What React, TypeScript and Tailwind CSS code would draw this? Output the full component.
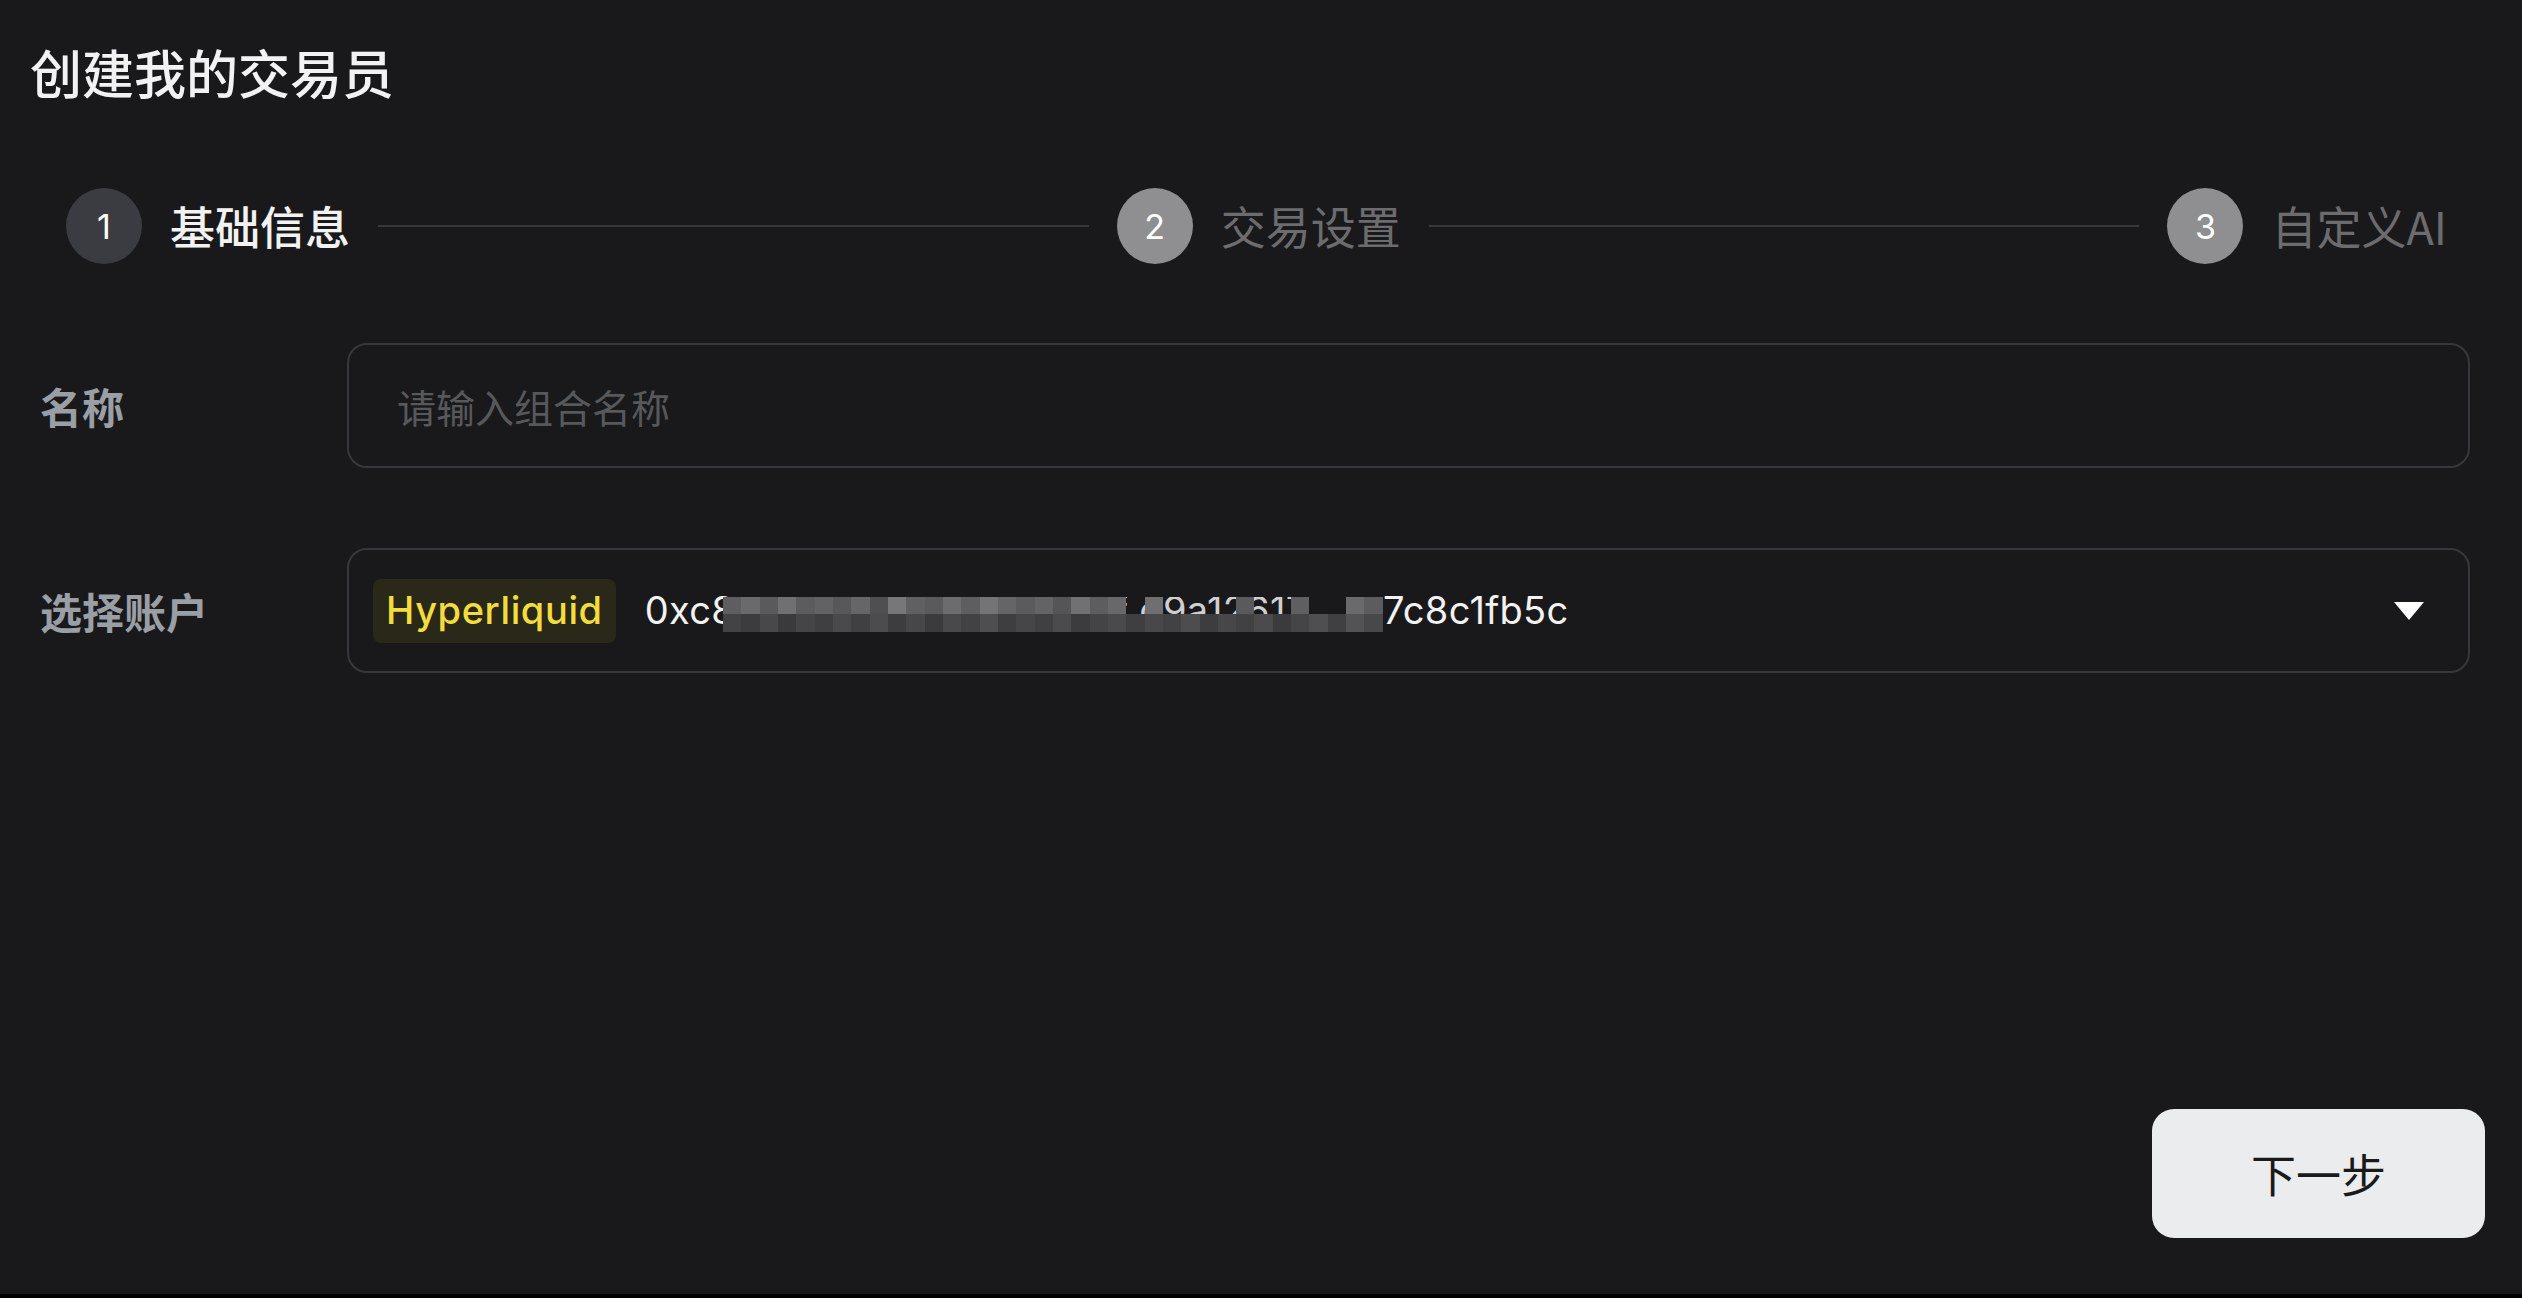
const steps = [
  { n: 1, label: "基础信息", active: true },
  { n: 2, label: "交易设置", active: false },
  { n: 3, label: "自定义AI", active: false },
];

// pixelated blur over the wallet address
const topRow = [
  "bg-[#5e5e61]", "bg-[#6a6a6d]", "bg-[#5a5a5d]", "bg-[#707073]", "bg-[#5c5c5f]", "bg-[#626265]",
  "bg-[#58585b]", "bg-[#666669]", "bg-[#4f4f52]", "bg-[#77777a]", "bg-[#606063]", "bg-[#5a5a5d]",
  "bg-[#6c6c6f]", "bg-[#5e5e61]", "bg-[#747477]", "bg-[#656568]", "bg-[#5b5b5e]", "bg-[#636366]",
  "bg-[#555558]", "bg-[#717174]", "bg-[#5d5d60]", "bg-[#68686b]", "bg-transparent", "bg-[#6f6f72]",
  "bg-transparent", "bg-transparent", "bg-transparent", "bg-transparent", "bg-[#5a5a5d]", "bg-transparent",
  "bg-transparent", "bg-[#5f5f62]", "bg-transparent", "bg-transparent", "bg-[#6a6a6d]", "bg-[#5c5c5f]",
];

const bottomRow = [
  "bg-[#434346]", "bg-[#3c3c3f]", "bg-[#48484b]", "bg-[#3a3a3d]", "bg-[#454548]", "bg-[#3f3f42]",
  "bg-[#4a4a4d]", "bg-[#404043]", "bg-[#4c4c4f]", "bg-[#3d3d40]", "bg-[#474749]", "bg-[#3b3b3e]",
  "bg-[#49494c]", "bg-[#424245]", "bg-[#4e4e51]", "bg-[#3e3e41]", "bg-[#464649]", "bg-[#404043]",
  "bg-[#4b4b4e]", "bg-[#3c3c3f]", "bg-[#444447]", "bg-[#4a4a4d]", "bg-[#3f3f42]", "bg-[#48484b]",
  "bg-[#424245]", "bg-[#4d4d50]", "bg-[#3d3d40]", "bg-[#474749]", "bg-[#414144]", "bg-[#4b4b4e]",
  "bg-[#3b3b3e]", "bg-[#454548]", "bg-[#4f4f52]", "bg-[#404043]", "bg-[#535356]", "bg-[#48484b]",
];

export default function App() {
  return (
    <div className="flex h-[1298px] w-full flex-col bg-[#19191b] font-['Inter','Noto_Sans_CJK_SC',sans-serif] text-white">
      <div className="flex flex-1 flex-col">
        <h1 className="pl-[30px] pt-[46px] font-['Noto_Sans_CJK_SC',sans-serif] text-[52px] font-medium leading-none text-[#f2f2f2]">
          创建我的交易员
        </h1>

        <div className="mt-[90px] flex items-center pl-[66px] pr-[75px]">
          {steps.map((s, i) => (
            <StepItem key={s.n} n={s.n} label={s.label} active={s.active} last={i === steps.length - 1} />
          ))}
        </div>

        <div className="mt-[79px] flex flex-col gap-[80px] pl-[40px] pr-[52px]">
          <div className="flex items-center">
            <label className="w-[307px] font-['Noto_Sans_CJK_SC',sans-serif] text-[42px] font-semibold text-[#9a9ea5]">
              名称
            </label>
            <input
              className="h-[125px] flex-1 rounded-[20px] border-2 border-[#37383b] bg-transparent pl-[48px] font-['Noto_Sans_CJK_SC',sans-serif] text-[39px] text-white outline-none placeholder:text-[#57585c]"
              placeholder="请输入组合名称"
            />
          </div>

          <div className="flex items-center">
            <label className="w-[307px] font-['Noto_Sans_CJK_SC',sans-serif] text-[42px] font-semibold text-[#9a9ea5]">
              选择账户
            </label>
            <div className="flex h-[125px] flex-1 items-center rounded-[20px] border-2 border-[#37383b] pl-[24px] pr-[44px]">
              <span className="flex h-[64px] items-center rounded-[8px] bg-[#2a2819] px-[13px] text-[38px] font-medium tracking-[0.6px] text-[#f3dc3d]">
                Hyperliquid
              </span>
              <div className="ml-[29px] flex flex-1 items-center text-[38px] tracking-[0.3px] text-[#f2f2f2]">
                <span>0xc8</span>
                <div className="relative -ml-[12px] mt-[8px] h-[35px] w-[660px] overflow-hidden">
                  <span className="absolute left-[391px] -top-[6px] text-[38px] leading-none text-[#cfcfd1]">
                    f d9a12617
                  </span>
                  <div className="relative flex h-[17px]">
                    {topRow.map((c, i) => (
                      <div key={i} className={`h-full flex-1 ${c}`} />
                    ))}
                  </div>
                  <div className="relative flex h-[18px]">
                    {bottomRow.map((c, i) => (
                      <div key={i} className={`h-full flex-1 ${c}`} />
                    ))}
                  </div>
                </div>
                <span>7c8c1fb5c</span>
              </div>
              <svg width="30" height="18" viewBox="0 0 30 18" className="shrink-0">
                <path d="M0 0 H30 L15 18 Z" fill="#ffffff" />
              </svg>
            </div>
          </div>
        </div>

        <div className="mt-auto flex justify-end pb-[56px] pr-[37px]">
          <button className="h-[129px] w-[333px] rounded-[22px] bg-[#ebecee] font-['Noto_Sans_CJK_SC',sans-serif] text-[45px] text-[#1a1a1a]">
            下一步
          </button>
        </div>
      </div>
      <div className="h-[4px] bg-black" />
    </div>
  );
}

function StepItem({ n, label, active, last }: { n: number; label: string; active: boolean; last: boolean }) {
  return (
    <>
      <div className="flex shrink-0 items-center gap-[28px]">
        <span
          className={
            active
              ? "flex h-[76px] w-[76px] items-center justify-center rounded-full bg-[#3b3c41] text-[34px] text-white"
              : "flex h-[76px] w-[76px] items-center justify-center rounded-full bg-[#8f8f92] text-[34px] text-white"
          }
        >
          {n}
        </span>
        <span
          className={
            active
              ? "font-['Noto_Sans_CJK_SC',sans-serif] text-[45px] font-medium text-[#f2f2f2]"
              : "font-['Noto_Sans_CJK_SC',sans-serif] text-[45px] text-[#6c6c6f]"
          }
        >
          {label}
        </span>
      </div>
      {!last && <div className="mx-[28px] h-[2px] flex-1 bg-[#38383b]" />}
    </>
  );
}
